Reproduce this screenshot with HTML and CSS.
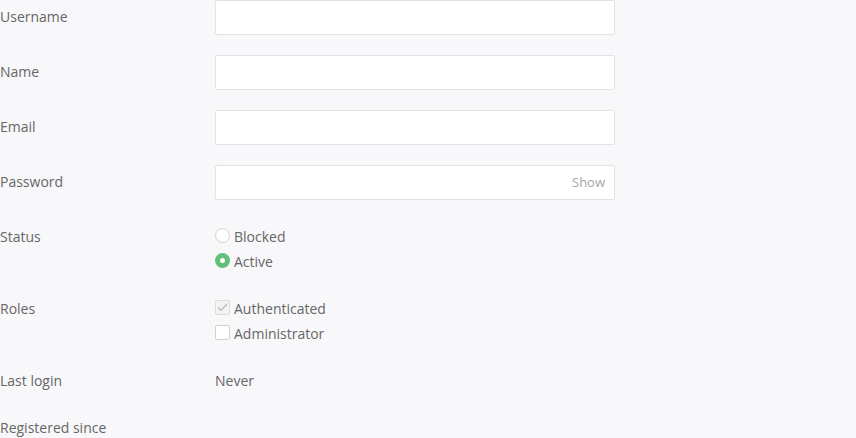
FILE: index.html
```html
<!DOCTYPE html>
<html>
<head>
<meta charset="utf-8">
<link rel="stylesheet" href="styles.css">
</head>
<body>
<form class="form">
  <div class="row">
    <label class="label">Username</label>
    <div class="field"><input class="input" type="text"></div>
  </div>
  <div class="row">
    <label class="label">Name</label>
    <div class="field"><input class="input" type="text"></div>
  </div>
  <div class="row">
    <label class="label">Email</label>
    <div class="field"><input class="input" type="text"></div>
  </div>
  <div class="row">
    <label class="label">Password</label>
    <div class="field password">
      <input class="input" type="password">
      <span class="show">Show</span>
    </div>
  </div>
  <div class="row">
    <label class="label">Status</label>
    <div class="options">
      <div class="option"><span class="radio"></span><span class="text">Blocked</span></div>
      <div class="option"><span class="radio checked"></span><span class="text">Active</span></div>
    </div>
  </div>
  <div class="row">
    <label class="label">Roles</label>
    <div class="options">
      <div class="option"><span class="checkbox disabled">
        <svg width="13" height="13" viewBox="0 0 13 13"><path d="M2 6.5 L5 9.5 L11 3" fill="none" stroke="#b4b4b4" stroke-width="1.2"/></svg>
      </span><span class="text">Authenticated</span></div>
      <div class="option"><span class="checkbox"></span><span class="text">Administrator</span></div>
    </div>
  </div>
  <div class="row">
    <label class="label">Last login</label>
    <div class="value">Never</div>
  </div>
  <div class="row">
    <label class="label">Registered since</label>
    <div class="value"></div>
  </div>
</form>
</body>
</html>
```
FILE: styles.css
```css
html, body {
  margin: 0;
  padding: 0;
  background: #f8f8fa;
}
body {
  font-family: "Open Sans", "Noto Sans", sans-serif;
  font-size: 14px;
  color: #666666;
}
.form {
  display: flex;
  flex-direction: column;
  gap: 20px;
}
.row {
  display: grid;
  grid-template-columns: 215px 400px;
}
.label {
  padding-top: 6px;
  line-height: 21px;
  color: #666666;
}
.field {
  position: relative;
  height: 35px;
}
.input {
  box-sizing: border-box;
  width: 400px;
  height: 35px;
  margin: 0;
  border: 1px solid #e3e3e6;
  border-radius: 2px;
  background: #ffffff;
  font-family: inherit;
  font-size: 14px;
  padding: 0 10px;
  outline: none;
}
.show {
  position: absolute;
  right: 10px;
  top: 0;
  line-height: 35px;
  font-size: 13px;
  color: #a6a6a6;
}
.options {
  display: flex;
  flex-direction: column;
  gap: 4px;
  padding: 5px 0 1px;
}
.option {
  display: flex;
  align-items: flex-start;
  gap: 4px;
  height: 21px;
  color: #666666;
}
.text {
  line-height: 21px;
  padding-top: 1px;
}
.radio {
  box-sizing: border-box;
  width: 15px;
  height: 15px;
  margin-top: 3px;
  border: 1px solid #d2d2d2;
  border-radius: 50%;
  background: #ffffff;
  flex: none;
}
.radio.checked {
  border: 5px solid #60c07a;
  background: #ffffff;
}
.checkbox {
  box-sizing: border-box;
  width: 15px;
  height: 15px;
  margin-top: 3px;
  border: 1px solid #d2d2d2;
  border-radius: 2px;
  background: #ffffff;
  flex: none;
  display: flex;
  align-items: center;
  justify-content: center;
}
.checkbox.disabled {
  background: #f3f3f5;
  border-color: #dcdcdc;
}
.value {
  padding-top: 6px;
  line-height: 21px;
}
```
